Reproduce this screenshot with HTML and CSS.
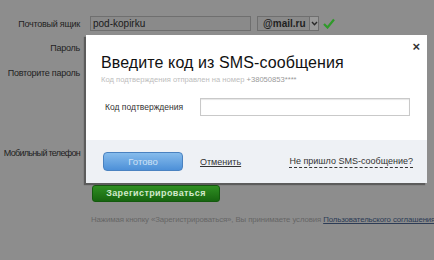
FILE: index.html
```html
<!DOCTYPE html>
<html>
<head>
<meta charset="utf-8">
<link rel="stylesheet" href="styles.css">
</head>
<body>
<div class="page">
  <div class="form">
    <div class="row r1">
      <div class="label">Почтовый ящик</div>
      <div class="field">
        <div class="input email">pod-kopirku</div>
        <div class="select"><span class="sel-text">@mail.ru</span><span class="sel-arrow"><svg width="7" height="5" viewBox="0 0 7 5"><path d="M1 1 L3.5 3.8 L6 1" fill="none" stroke="#2a2a2a" stroke-width="1.4"/></svg></span></div>
        <svg class="check" width="12" height="11" viewBox="0 0 12 11"><path d="M1 6 L4.5 9.5 L11 1.5" fill="none" stroke="#2f9a2a" stroke-width="2.2"/></svg>
      </div>
    </div>
    <div class="row r2"><div class="label">Пароль</div></div>
    <div class="row r3"><div class="label">Повторите пароль</div></div>
    <div class="row r4"><div class="label label-tight">Мобильный телефон</div></div>
    <div class="row r5">
      <div class="label"></div>
      <div class="field"><div class="reg">Зарегистрироваться</div></div>
    </div>
    <div class="terms">Нажимая кнопку «Зарегистрироваться», Вы принимаете условия <a class="terms-link">Пользовательского соглашения</a></div>
  </div>

  <div class="modal">
    <div class="modal-body">
      <div class="close">×</div>
      <h1 class="title">Введите код из SMS-сообщения</h1>
      <div class="sub">Код подтверждения отправлен на номер <span class="phone">+38050853****</span></div>
      <div class="code-row">
        <div class="code-label">Код подтверждения</div>
        <div class="code-input"></div>
      </div>
    </div>
    <div class="modal-foot">
      <div class="done">Готово</div>
      <a class="cancel">Отменить</a>
      <a class="nosms">Не пришло SMS-сообщение?</a>
    </div>
  </div>
</div>
</body>
</html>
```
FILE: styles.css
```css
* { box-sizing: border-box; }
html, body { margin: 0; padding: 0; }
body {
  width: 434px;
  height: 260px;
  overflow: hidden;
  background: #8d8d8d;
  font-family: "Liberation Sans", Arial, sans-serif;
}
.page { position: relative; width: 434px; height: 260px; }
.form { display: flex; flex-direction: column; padding-top: 16px; }
.row { display: flex; align-items: center; }
.label {
  width: 80px;
  flex: none;
  text-align: right;
  font-size: 9px;
  color: #1f1f1f;
  white-space: nowrap;
  letter-spacing: -0.25px;
}
.label-tight {
  display: flex;
  justify-content: flex-end;
  letter-spacing: -0.7px;
}
.r1 { height: 15px; }
.r2 { height: 15px; margin-top: 9px; }
.r3 { height: 15px; margin-top: 10px; }
.r4 { height: 15px; margin-top: 65px; }
.r5 { height: 17px; margin-top: 25px; }
.field { display: flex; align-items: center; margin-left: 10px; }
.input {
  height: 15px;
  border: 1px solid #6f6f6f;
  background: #8a8a8a;
  font-size: 10px;
  color: #1a1a1a;
  line-height: 13px;
  padding-left: 2px;
}
.email { width: 161px; }
.select {
  margin-left: 6px;
  width: 62px;
  height: 15px;
  border: 1px solid #6f6f6f;
  background: #8a8a8a;
  display: flex;
  align-items: stretch;
}
.sel-text {
  flex: 1;
  font-size: 10px;
  font-weight: bold;
  color: #1f1f1f;
  line-height: 13px;
  padding-left: 5px;
}
.sel-arrow {
  width: 9px;
  border-left: 1px solid #6f6f6f;
  background: #9a9a9a;
  display: flex;
  align-items: center;
  justify-content: center;
}
.check { margin-left: 4px; }
.reg {
  margin-left: 2px;
  width: 128px;
  height: 17px;
  border-radius: 3px;
  background: linear-gradient(#2f8f22, #176510);
  border: 1px solid #145a0e;
  color: #d2e9cb;
  font-size: 9px;
  font-weight: bold;
  letter-spacing: 0.4px;
  text-align: center;
  line-height: 15px;
}
.terms {
  margin-top: 13px;
  padding-left: 91px;
  font-size: 7.8px;
  color: #666;
  white-space: nowrap;
  letter-spacing: -0.1px;
}
.terms-link { color: #2c3b55; text-decoration: underline; }

.modal {
  position: absolute;
  left: 86px;
  top: 35px;
  width: 341px;
  height: 148px;
  background: #fff;
  box-shadow: -2px 2px 1px rgba(60,60,60,0.6);
  display: flex;
  flex-direction: column;
}
.modal-body { position: relative; flex: 1; padding: 18px 15px 0 15px; }
.close {
  position: absolute;
  right: 7px;
  top: 4px;
  font-size: 13px;
  font-weight: bold;
  color: #333;
}
.title {
  margin: 0;
  font-weight: normal;
  font-size: 16px;
  line-height: 19px;
  color: #111;
  letter-spacing: 0.1px;
}
.sub {
  margin-top: 3px;
  font-size: 7.6px;
  color: #bdbdbd;
}
.phone { color: #9a9a9a; }
.code-row { display: flex; align-items: center; margin-top: 14px; }
.code-label {
  width: 99px;
  padding-left: 4px;
  font-size: 8.5px;
  color: #333;
}
.code-input {
  width: 210px;
  height: 18px;
  border: 1px solid #c9c9c9;
  box-shadow: inset 0 1px 1px #e6e6e6;
}
.modal-foot {
  height: 43px;
  background: #eef1f5;
  display: flex;
  align-items: center;
  padding-left: 17px;
}
.done {
  width: 80px;
  height: 19px;
  border-radius: 4px;
  background: linear-gradient(#86bcec, #4d90d8);
  border: 1px solid #4a82c0;
  color: #cfe2f6;
  font-size: 9.5px;
  text-align: center;
  line-height: 17px;
}
.cancel {
  margin-left: 17px;
  font-size: 9px;
  color: #333;
  text-decoration: underline;
}
.nosms {
  margin-left: auto;
  margin-right: 14px;
  font-size: 9px;
  color: #333;
  border-bottom: 1px dashed #333;
  line-height: 11px;
}
```
